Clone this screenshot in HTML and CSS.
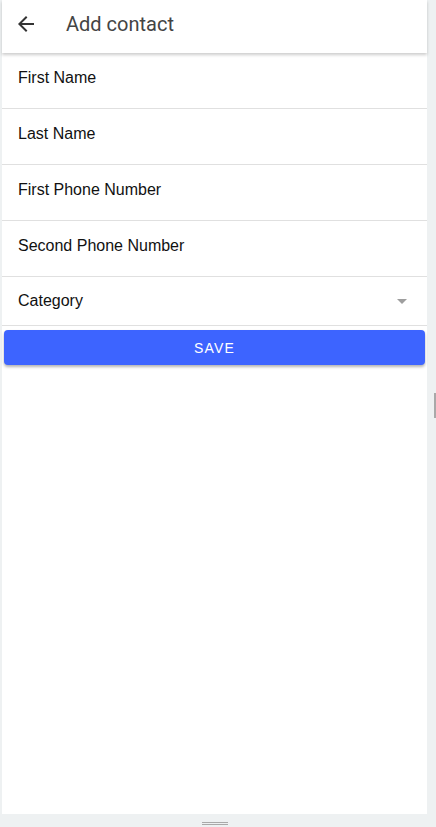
FILE: index.html
```html
<!DOCTYPE html>
<html>
<head>
<meta charset="utf-8">
<link rel="stylesheet" href="styles.css">
</head>
<body>
<div class="frame">
  <div class="app">
    <header class="bar">
      <span class="back">
        <svg viewBox="0 0 24 24" width="24" height="24"><path d="M20 11H7.83l5.59-5.59L12 4l-8 8 8 8 1.41-1.41L7.83 13H20v-2z" fill="#333"/></svg>
      </span>
      <h1 class="title">Add contact</h1>
    </header>
    <div class="form">
      <div class="field">First Name</div>
      <div class="field">Last Name</div>
      <div class="field">First Phone Number</div>
      <div class="field">Second Phone Number</div>
      <div class="field select"><span>Category</span><span class="caret"></span></div>
      <button class="save">SAVE</button>
    </div>
  </div>
  <div class="vhandle"></div>
</div>
<div class="bottom"><div class="hhandle"></div></div>
</body>
</html>
```
FILE: styles.css
```css
html, body { margin: 0; padding: 0; }
body {
  background: #eef1f2;
  width: 436px;
  height: 827px;
  overflow: hidden;
  font-family: "Liberation Sans", Arial, sans-serif;
}
.frame {
  display: flex;
  height: 814px;
  padding-left: 2px;
}
.app {
  width: 425px;
  height: 814px;
  background: #fff;
  display: flex;
  flex-direction: column;
}
.bar {
  height: 53px;
  box-sizing: border-box;
  padding-bottom: 5px;
  display: flex;
  align-items: center;
  background: #fff;
  box-shadow: 0 2px 3px rgba(0,0,0,0.2);
  position: relative;
  z-index: 1;
}
.back {
  width: 24px;
  height: 24px;
  margin-left: 12px;
  display: flex;
}
.title {
  margin: 0 0 0 28px;
  font-family: Roboto, sans-serif;
  font-weight: 400;
  font-size: 20px;
  color: #444;
}
.form {
  display: flex;
  flex-direction: column;
}
.field {
  box-sizing: border-box;
  border-bottom: 1px solid #e0e0e0;
  height: 56px;
  padding: 0 0 6px 16px;
  display: flex;
  align-items: center;
  font-size: 16px;
  color: #111;
}
.field.select {
  height: 49px;
  padding: 0 20px 0 16px;
  justify-content: space-between;
}
.caret {
  width: 0;
  height: 0;
  border-left: 5px solid transparent;
  border-right: 5px solid transparent;
  border-top: 5px solid #9e9e9e;
}
.save {
  margin: 4px 2px 0 2px;
  height: 35px;
  border: none;
  border-radius: 4px;
  background: #3d64ff;
  color: #fff;
  font-family: "Liberation Sans", Arial, sans-serif;
  font-size: 14px;
  letter-spacing: 1.2px;
  box-shadow: 0 2px 3px rgba(0,0,0,0.3);
}
.vhandle {
  width: 2px;
  height: 25px;
  background: #a9a9a9;
  margin: 393px 0 0 7px;
}
.bottom {
  height: 13px;
  display: flex;
  justify-content: center;
  padding-top: 8px;
  box-sizing: border-box;
}
.hhandle {
  width: 26px;
  height: 1px;
  border-top: 1px solid #a9a9a9;
  border-bottom: 1px solid #a9a9a9;
  margin-left: -6px;
}
```
